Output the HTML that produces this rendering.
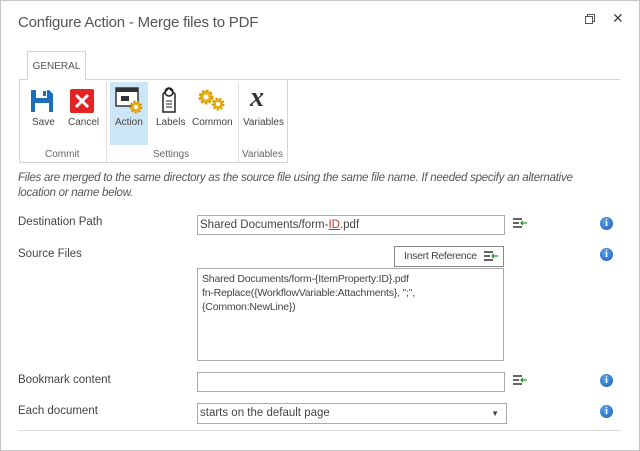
<!DOCTYPE html>
<html><head><style>
*{box-sizing:border-box;margin:0;padding:0}
body{width:640px;height:451px;background:#fff;font-family:"Liberation Sans",sans-serif;position:relative;overflow:hidden;color:#333}
.frame{position:absolute;left:0;top:0;width:640px;height:451px;border:1px solid #c6c6c6}
.a{position:absolute}
.t{font-size:11.5px;color:#444;white-space:nowrap}
.inp{position:absolute;border:1px solid #ababab;background:#fff;font-size:11.5px;color:#444;padding-left:2px;white-space:nowrap}
.info{position:absolute;width:13px;height:13px;border-radius:50%;background:radial-gradient(circle at 40% 35%,#5aa0e8,#1a5fb4);color:#fff;font:bold 10px "Liberation Serif",serif;text-align:center;line-height:13px}
.ref{position:absolute;width:14px;height:11px}
</style></head><body>
<div class="frame"></div>
<div class="a" style="left:18px;top:14px;font-size:15px;color:#555;letter-spacing:-0.2px">Configure Action - Merge files to PDF</div>
<svg class="a" style="left:584px;top:13px" width="12" height="12"><rect x="1.5" y="3.5" width="7" height="7" fill="none" stroke="#555"/><path d="M3.5 3.5V1.5H10.5V8.5H8.5" fill="none" stroke="#555"/></svg>
<div class="a" style="left:612px;top:10px;font-size:14px;color:#444">✕</div>
<div class="a" style="left:27px;top:51px;width:59px;height:29px;border:1px solid #d5d5d5;border-bottom:none;background:#fff;font-size:10px;color:#555;text-align:center;line-height:30px;z-index:2">GENERAL</div>
<div class="a" style="left:19px;top:79px;width:601px;height:84px;border-top:1px solid #d5d5d5"></div>
<div class="a" style="left:19px;top:79px;width:269px;height:84px;border:1px solid #d5d5d5;border-top:none"></div>
<div class="a" style="left:106px;top:82px;height:80px;border-left:1px solid #e0e0e0"></div>
<div class="a" style="left:238px;top:82px;height:80px;border-left:1px solid #e0e0e0"></div>
<div class="a" style="left:110px;top:82px;width:38px;height:63px;background:#cde6f7"></div>
<svg class="a" style="left:30px;top:89px" width="24" height="24"><path d="M1 1H19L23 5V23H1Z" fill="#1e6fb8"/><rect x="6" y="1" width="11" height="8" fill="#fff"/><rect x="5" y="14" width="14" height="9" fill="#fff"/><rect x="13" y="2" width="3" height="5" fill="#1e6fb8"/></svg>
<svg class="a" style="left:70px;top:89px" width="24" height="24"><rect x="0" y="0" width="24" height="24" rx="2" fill="#e32424"/><path d="M6 6L18 18M18 6L6 18" stroke="#fff" stroke-width="3"/></svg>
<svg class="a" style="left:115px;top:87px" width="30" height="28"><rect x="1" y="1" width="22" height="18" fill="#fff" stroke="#333" stroke-width="1.5"/><rect x="1" y="1" width="22" height="4" fill="#333"/><rect x="6" y="9" width="8" height="5" fill="#333"/><circle cx="21" cy="20" r="5" fill="#e8b21f" stroke="#d89a00" stroke-width="3" stroke-dasharray="2 1.5"/><circle cx="21" cy="20" r="2" fill="#fff"/></svg>
<svg class="a" style="left:159px;top:85px" width="20" height="30"><path d="M4 9L10 3L16 9V27H4Z" fill="#fff" stroke="#222" stroke-width="1.5"/><circle cx="10" cy="7" r="4" fill="none" stroke="#222" stroke-width="1.5"/><path d="M7 16H13M7 19H13M7 22H13" stroke="#222"/></svg>
<svg class="a" style="left:197px;top:88px" width="30" height="24"><circle cx="9" cy="9" r="6" fill="#e8b21f" stroke="#d8a000" stroke-width="3" stroke-dasharray="2.5 1.5"/><circle cx="9" cy="9" r="2.5" fill="#fff"/><circle cx="21" cy="16" r="5" fill="#e8b21f" stroke="#d8a000" stroke-width="3" stroke-dasharray="2 1.5"/><circle cx="21" cy="16" r="2" fill="#fff"/></svg>
<div class="a" style="left:250px;top:82px;font:italic bold 28px 'Liberation Serif',serif;color:#333">x</div>
<div class="a t" style="left:32px;top:117px;font-size:10px">Save</div>
<div class="a t" style="left:68px;top:117px;font-size:10px">Cancel</div>
<div class="a t" style="left:115px;top:117px;font-size:10px">Action</div>
<div class="a t" style="left:156px;top:117px;font-size:10px">Labels</div>
<div class="a t" style="left:192px;top:117px;font-size:10px">Common</div>
<div class="a t" style="left:243px;top:117px;font-size:10px">Variables</div>
<div class="a t" style="left:45px;top:149px;font-size:10px;color:#666">Commit</div>
<div class="a t" style="left:153px;top:149px;font-size:10px;color:#666">Settings</div>
<div class="a t" style="left:242px;top:149px;font-size:10px;color:#666">Variables</div>
<div class="a" style="left:18px;top:171px;font-size:11.5px;font-style:italic;color:#555;line-height:15px;width:600px;letter-spacing:-0.25px">Files are merged to the same directory as the source file using the same file name. If needed specify an alternative<br>location or name below.</div>
<div class="a t" style="left:18px;top:216px">Destination Path</div>
<div class="inp" style="left:197px;top:215px;width:308px;height:20px;line-height:18px">Shared Documents/form-<span style="color:#c33;text-decoration:underline">ID</span>.pdf</div>
<div class="a t" style="left:18px;top:248px">Source Files</div>
<div class="inp" style="left:394px;top:246px;width:110px;height:21px;line-height:19px;padding-left:9px;border-color:#888;font-size:10.5px;letter-spacing:-0.3px">Insert Reference</div>
<div class="inp" style="left:197px;top:268px;width:307px;height:93px;padding:3px 4px;line-height:14px;font-size:10.5px;letter-spacing:-0.2px">Shared Documents/form-{ItemProperty:ID}.pdf<br>fn-Replace({WorkflowVariable:Attachments}, ";",<br>{Common:NewLine})</div>
<div class="a t" style="left:18px;top:374px">Bookmark content</div>
<div class="inp" style="left:197px;top:372px;width:308px;height:20px"></div>
<div class="a t" style="left:18px;top:405px">Each document</div>
<div class="inp" style="left:197px;top:403px;width:310px;height:21px;line-height:19px">starts on the default page<span style="position:absolute;right:7px;font-size:8px">▼</span></div>
<div class="a" style="left:18px;top:430px;width:603px;border-top:1px solid #ddd"></div>
<svg class="ref" style="left:513px;top:218px" viewBox="0 0 14 11"><path d="M0 1H9M0 5H6M0 9H9" stroke="#333" stroke-width="1.5"/><path d="M8 5H14M10 3L8 5L10 7" stroke="#2a9a2a" stroke-width="1.3" fill="none"/></svg>
<svg class="ref" style="left:484px;top:251px" viewBox="0 0 14 11"><path d="M0 1H9M0 5H6M0 9H9" stroke="#333" stroke-width="1.5"/><path d="M8 5H14M10 3L8 5L10 7" stroke="#2a9a2a" stroke-width="1.3" fill="none"/></svg>
<svg class="ref" style="left:513px;top:375px" viewBox="0 0 14 11"><path d="M0 1H9M0 5H6M0 9H9" stroke="#333" stroke-width="1.5"/><path d="M8 5H14M10 3L8 5L10 7" stroke="#2a9a2a" stroke-width="1.3" fill="none"/></svg>
<div class="info" style="left:600px;top:217px">i</div>
<div class="info" style="left:600px;top:248px">i</div>
<div class="info" style="left:600px;top:374px">i</div>
<div class="info" style="left:600px;top:405px">i</div>
</body></html>
